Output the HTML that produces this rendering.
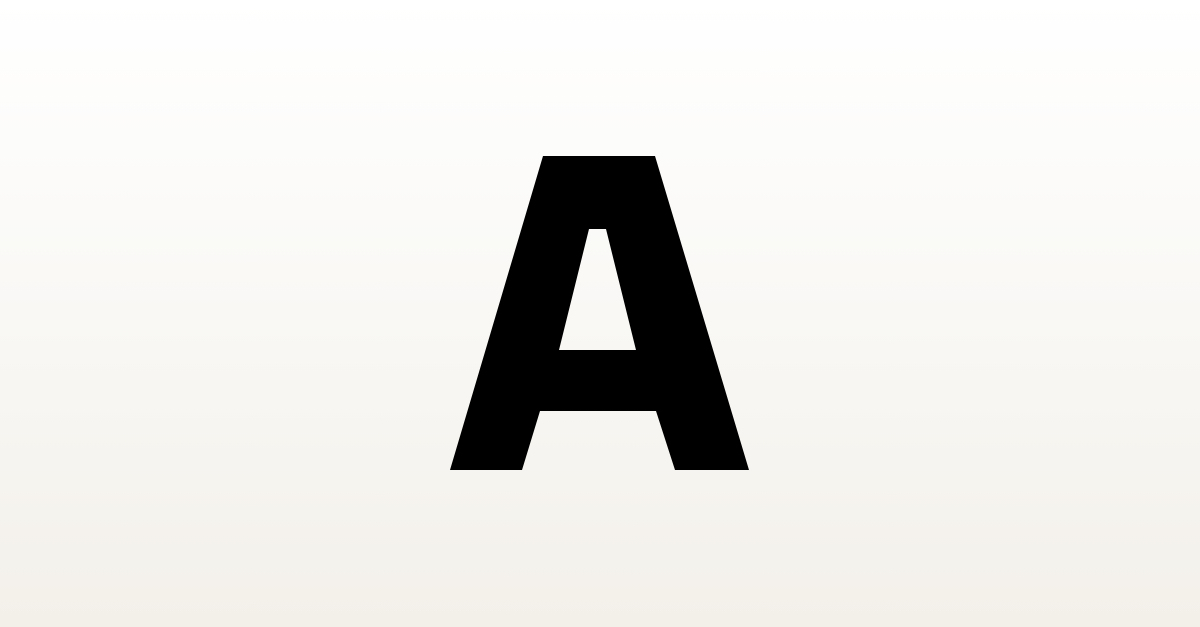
<!DOCTYPE html>
<html><head><meta charset="utf-8"><style>
html,body{margin:0;padding:0;width:1200px;height:627px;overflow:hidden}
body{background:linear-gradient(to bottom,#ffffff 0%,#f9f8f5 50%,#f3f0ea 100%)}
svg{position:absolute;left:0;top:0}
</style></head><body>
<svg width="1200" height="627" viewBox="0 0 1200 627" aria-label="A">
<path fill="#000" fill-rule="evenodd" d="M543 156 L655 156 L749 470 L675 470 L656 411 L540 411 L522 470 L450 470 Z M589 229 L606 229 L636 350 L559 350 Z"/>
</svg>
</body></html>
